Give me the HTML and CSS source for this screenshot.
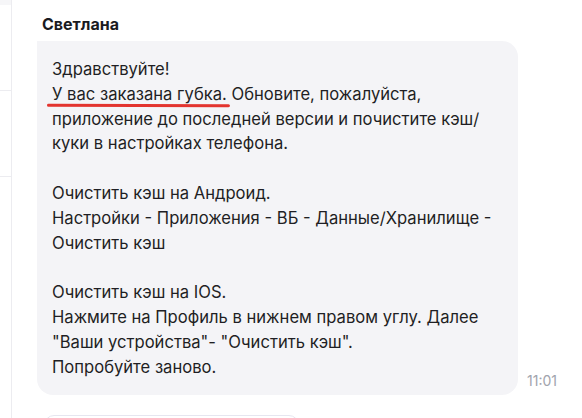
FILE: index.html
```html
<!DOCTYPE html>
<html lang="ru">
<head>
<meta charset="utf-8">
<link rel="stylesheet" href="styles.css">
</head>
<body>
<div class="page">
  <aside class="side">
    <div class="side-top"></div>
    <div class="side-item"></div>
    <div class="side-item"></div>
  </aside>
  <main class="chat">
    <div class="author">Светлана</div>
    <div class="row">
      <div class="bubble">
        <p>Здравствуйте!<br><span class="mark">У вас заказана губка.</span> Обновите, пожалуйста, приложение до последней версии и почистите кэш/<wbr>куки в настройках телефона.</p>
        <p>Очистить кэш на Андроид.<br>Настройки - Приложения - ВБ - Данные/Хранилище - Очистить кэш</p>
        <p>Очистить кэш на IOS.<br>Нажмите на Профиль в нижнем правом углу. Далее "Ваши устройства"- "Очистить кэш".<br>Попробуйте заново.</p>
      </div>
      <div class="time">11:01</div>
    </div>
    <div class="next"></div>
  </main>
</div>
</body>
</html>
```
FILE: styles.css
```css
* { box-sizing: border-box; }
html, body { margin: 0; padding: 0; background: #fff; }
body {
  font-family: Inter, "Noto Sans", "Liberation Sans", sans-serif;
  color: #1f1f24;
  width: 582px;
  height: 418px;
  overflow: hidden;
}
.page { display: flex; height: 418px; }
.side {
  width: 12px;
  flex: none;
  border-right: 1px solid #ececf0;
  display: flex;
  flex-direction: column;
}
.side-top { height: 5px; background: #f6f6f8; }
.side-item { height: 86px; border-bottom: 1px solid #ececf0; }
.side-item:first-of-type { height: 85px; }
.chat { flex: 1; padding-left: 25px; padding-top: 13px; }
.author {
  font-weight: 700;
  font-size: 16px;
  line-height: 22px;
  padding-left: 5px;
  color: #1a1a1f;
  margin-bottom: 6px;
}
.row { display: flex; align-items: flex-end; gap: 9px; }
.bubble {
  width: 481px;
  background: #f4f4f7;
  border-radius: 0 16px 16px 16px;
  padding: 16px 16px 16px 15px;
  font-size: 16.6px;
  line-height: 24.8px;
}
.bubble p { margin: 0; }
.bubble p + p { margin-top: 24.8px; }
.mark { position: relative; }
.mark::after {
  content: "";
  position: absolute;
  left: -5px;
  right: -3px;
  bottom: -3px;
  height: 2.5px;
  border-radius: 2px;
  background: #e3342f;
  transform: rotate(0.2deg);
}
.time {
  font-size: 14px;
  color: #a1a4ad;
  line-height: 16px;
  margin-bottom: 6px;
}
.next {
  margin-top: 20px;
  margin-left: 7px;
  width: 255px;
  height: 20px;
  border: 1px solid #e6e6f0;
  border-radius: 10px 10px 0 0;
}
```
